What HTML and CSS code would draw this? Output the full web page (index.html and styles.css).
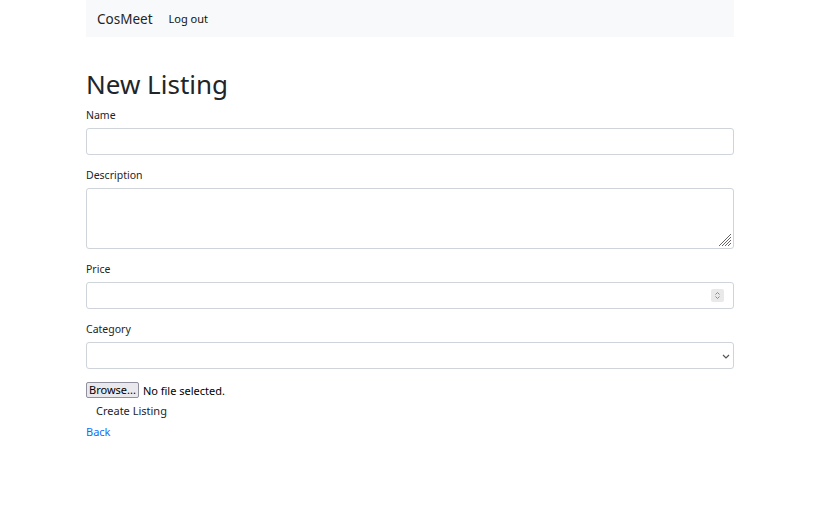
FILE: index.html
```html
<!DOCTYPE html>
<html>
<head>
<meta charset="utf-8">
<link rel="stylesheet" href="styles.css">
</head>
<body>
<div class="page">
  <nav class="navbar">
    <a class="brand" href="#">CosMeet</a>
    <a class="nav-link" href="#">Log out</a>
  </nav>
  <h1 class="title">New Listing</h1>
  <form class="form">
    <div class="field">
      <label class="label">Name</label>
      <input class="control" type="text">
    </div>
    <div class="field">
      <label class="label">Description</label>
      <div class="control area">
        <textarea class="bare"></textarea>
        <svg class="grip" width="14" height="14" viewBox="0 0 14 14"><path d="M13 1L1 13M13 4L4 13M13 7L7 13M13 10L10 13" stroke="#666" stroke-width="1" fill="none"/></svg>
      </div>
    </div>
    <div class="field">
      <label class="label">Price</label>
      <div class="control row">
        <input class="bare" type="text">
        <span class="spin"><svg width="11" height="11" viewBox="0 0 11 11"><path d="M3.5 4.5L5.5 2.5L7.5 4.5M3.5 6.5L5.5 8.5L7.5 6.5" stroke="#888" stroke-width="1" fill="none"/></svg></span>
      </div>
    </div>
    <div class="field">
      <label class="label">Category</label>
      <div class="control row">
        <span class="bare"></span>
        <svg class="chev" width="8" height="5" viewBox="0 0 8 5"><path d="M1 1L4 4L7 1" stroke="#555" stroke-width="1.2" fill="none"/></svg>
      </div>
    </div>
    <div class="file">
      <span class="browse">Browse...</span>
      <span class="nofile">No file selected.</span>
    </div>
    <button class="submit" type="button">Create Listing</button>
  </form>
  <a class="back" href="#">Back</a>
</div>
</body>
</html>
```
FILE: styles.css
```css
* { box-sizing: border-box; }
body {
  margin: 0;
  background: #fff;
  font-family: "Noto Sans", "Open Sans", sans-serif;
  color: #212529;
}
.page {
  margin: 0 89px 0 86px;
}
.navbar {
  background: #f8f9fa;
  height: 37px;
  display: flex;
  align-items: center;
  padding-left: 11px;
  gap: 16px;
}
.brand {
  color: #212529;
  text-decoration: none;
  font-size: 13.5px;
}
.nav-link {
  color: #111;
  text-decoration: none;
  font-size: 11px;
}
.title {
  margin: 29px 0 6px;
  font-weight: 400;
  font-size: 26px;
  line-height: 36px;
}
.form {
  display: flex;
  flex-direction: column;
}
.field {
  display: flex;
  flex-direction: column;
  margin-bottom: 13px;
}
.label {
  font-size: 10.5px;
  line-height: 14px;
  margin-bottom: 6px;
  color: #212529;
}
.control {
  height: 27px;
  border: 1px solid #ced4da;
  border-radius: 3px;
  background: #fff;
  width: 100%;
  outline: none;
  font: inherit;
}
.area {
  height: 61px;
  display: flex;
  align-items: flex-end;
}
.row {
  display: flex;
  align-items: center;
}
.bare {
  flex: 1;
  border: none;
  outline: none;
  resize: none;
  background: transparent;
  height: 100%;
  min-width: 0;
}
.grip {
  margin: 0 1px 1px 0;
}
.spin {
  width: 13px;
  height: 13px;
  background: #e9e9ea;
  border-radius: 2px;
  display: flex;
  align-items: center;
  justify-content: center;
  margin-right: 9px;
}
.chev {
  margin-right: 3px;
  margin-top: 1px;
}
.file {
  display: flex;
  align-items: center;
  gap: 4px;
  font-size: 11px;
}
.browse {
  border: 1px solid #8f8f9d;
  background: #e9e9ed;
  border-radius: 2px;
  padding: 0 2px;
  height: 16px;
  line-height: 14px;
  font-size: 11px;
  color: #000;
}
.nofile {
  color: #000;
}
.submit {
  align-self: flex-start;
  border: none;
  background: transparent;
  font: inherit;
  font-size: 11px;
  color: #212529;
  padding: 0 10px;
  margin-top: 3px;
  height: 18px;
}
.back {
  display: inline-block;
  margin-top: 3px;
  color: #0d6efd;
  text-decoration: none;
  font-size: 11px;
}
```
